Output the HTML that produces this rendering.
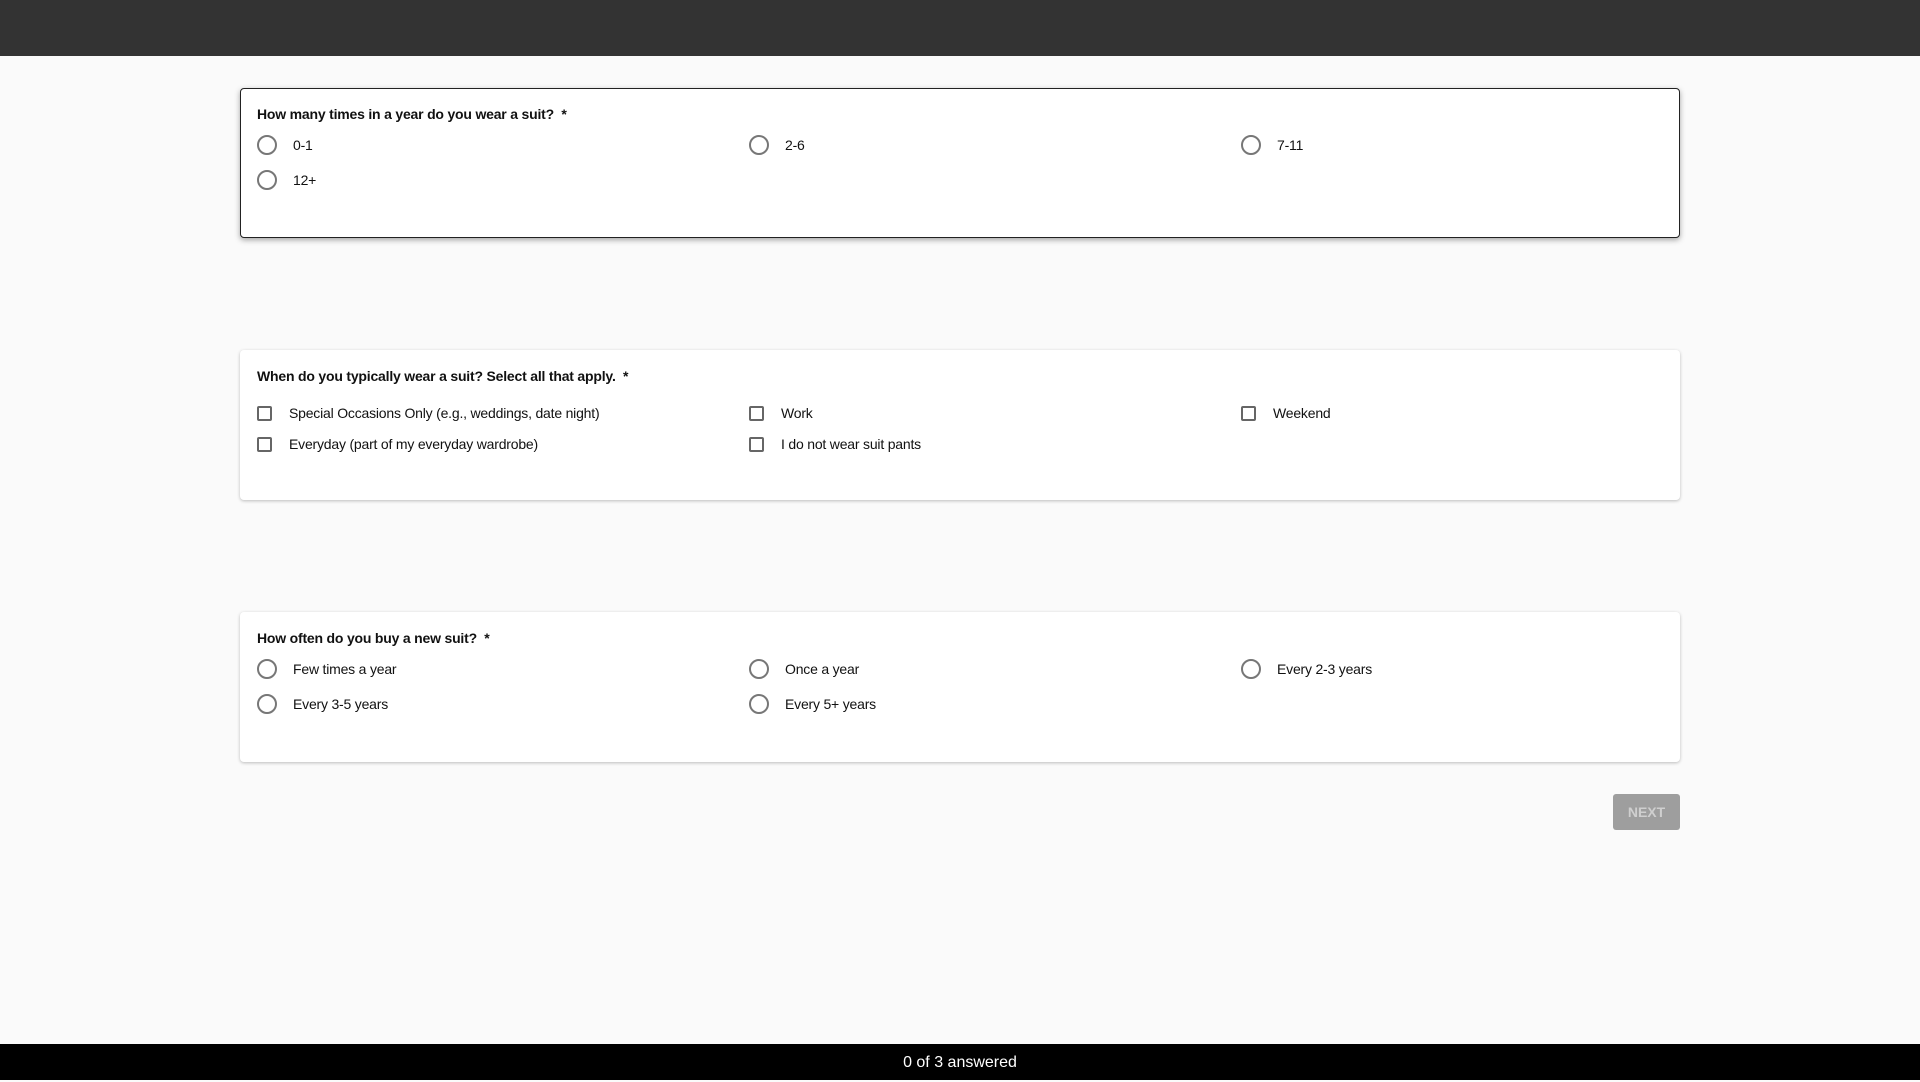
<!DOCTYPE html>
<html><head><meta charset="utf-8"><style>
*{box-sizing:border-box;margin:0;padding:0}
body{width:1920px;height:1080px;background:#fafafa;font-family:"Liberation Sans",sans-serif;position:relative;overflow:hidden;color:#111}
.top{position:absolute;left:0;top:0;width:1920px;height:56px;background:#333}
.card{position:absolute;left:240px;width:1440px;background:#fff;border-radius:4px;box-shadow:0 1px 3px rgba(0,0,0,.25)}
.card.sel{border:1px solid #222;box-shadow:0 2px 6px rgba(0,0,0,.35)}
.q{position:absolute;left:17px;font-size:14px;font-weight:bold;letter-spacing:-0.2px}
.opt{position:absolute;font-size:14px;letter-spacing:-0.2px;display:flex;align-items:center}
.r{width:20px;height:20px;border:2px solid #777;border-radius:50%;margin-right:16px}
.c{width:15px;height:15px;border:2px solid #666;border-radius:2px;margin-right:17px}
.next{position:absolute;left:1613px;top:794px;width:67px;height:36px;background:#9e9e9e;border-radius:3px;color:#cfcfcf;font-size:14px;font-weight:bold;text-align:center;line-height:36px}
.bot{position:absolute;left:0;top:1044px;width:1920px;height:36px;background:#000;color:#fff;text-align:center;font-size:16px;line-height:38px}
</style></head><body>
<div class="top"></div>

<div class="card sel" style="top:88px;height:150px">
<div class="q" style="top:17px;left:16px">How many times in a year do you wear a suit? &nbsp;*</div>
<div class="opt" style="left:16px;top:46px"><span class="r"></span>0-1</div>
<div class="opt" style="left:508px;top:46px"><span class="r"></span>2-6</div>
<div class="opt" style="left:1000px;top:46px"><span class="r"></span>7-11</div>
<div class="opt" style="left:16px;top:81px"><span class="r"></span>12+</div>
</div>

<div class="card" style="top:350px;height:150px">
<div class="q" style="top:18px">When do you typically wear a suit? Select all that apply. &nbsp;*</div>
<div class="opt" style="left:17px;top:55px"><span class="c"></span>Special Occasions Only (e.g., weddings, date night)</div>
<div class="opt" style="left:509px;top:55px"><span class="c"></span>Work</div>
<div class="opt" style="left:1001px;top:55px"><span class="c"></span>Weekend</div>
<div class="opt" style="left:17px;top:86px"><span class="c"></span>Everyday (part of my everyday wardrobe)</div>
<div class="opt" style="left:509px;top:86px"><span class="c"></span>I do not wear suit pants</div>
</div>

<div class="card" style="top:612px;height:150px">
<div class="q" style="top:18px">How often do you buy a new suit? &nbsp;*</div>
<div class="opt" style="left:17px;top:47px"><span class="r"></span>Few times a year</div>
<div class="opt" style="left:509px;top:47px"><span class="r"></span>Once a year</div>
<div class="opt" style="left:1001px;top:47px"><span class="r"></span>Every 2-3 years</div>
<div class="opt" style="left:17px;top:82px"><span class="r"></span>Every 3-5 years</div>
<div class="opt" style="left:509px;top:82px"><span class="r"></span>Every 5+ years</div>
</div>

<div class="next">NEXT</div>
<div class="bot">0 of 3 answered</div>
</body></html>
